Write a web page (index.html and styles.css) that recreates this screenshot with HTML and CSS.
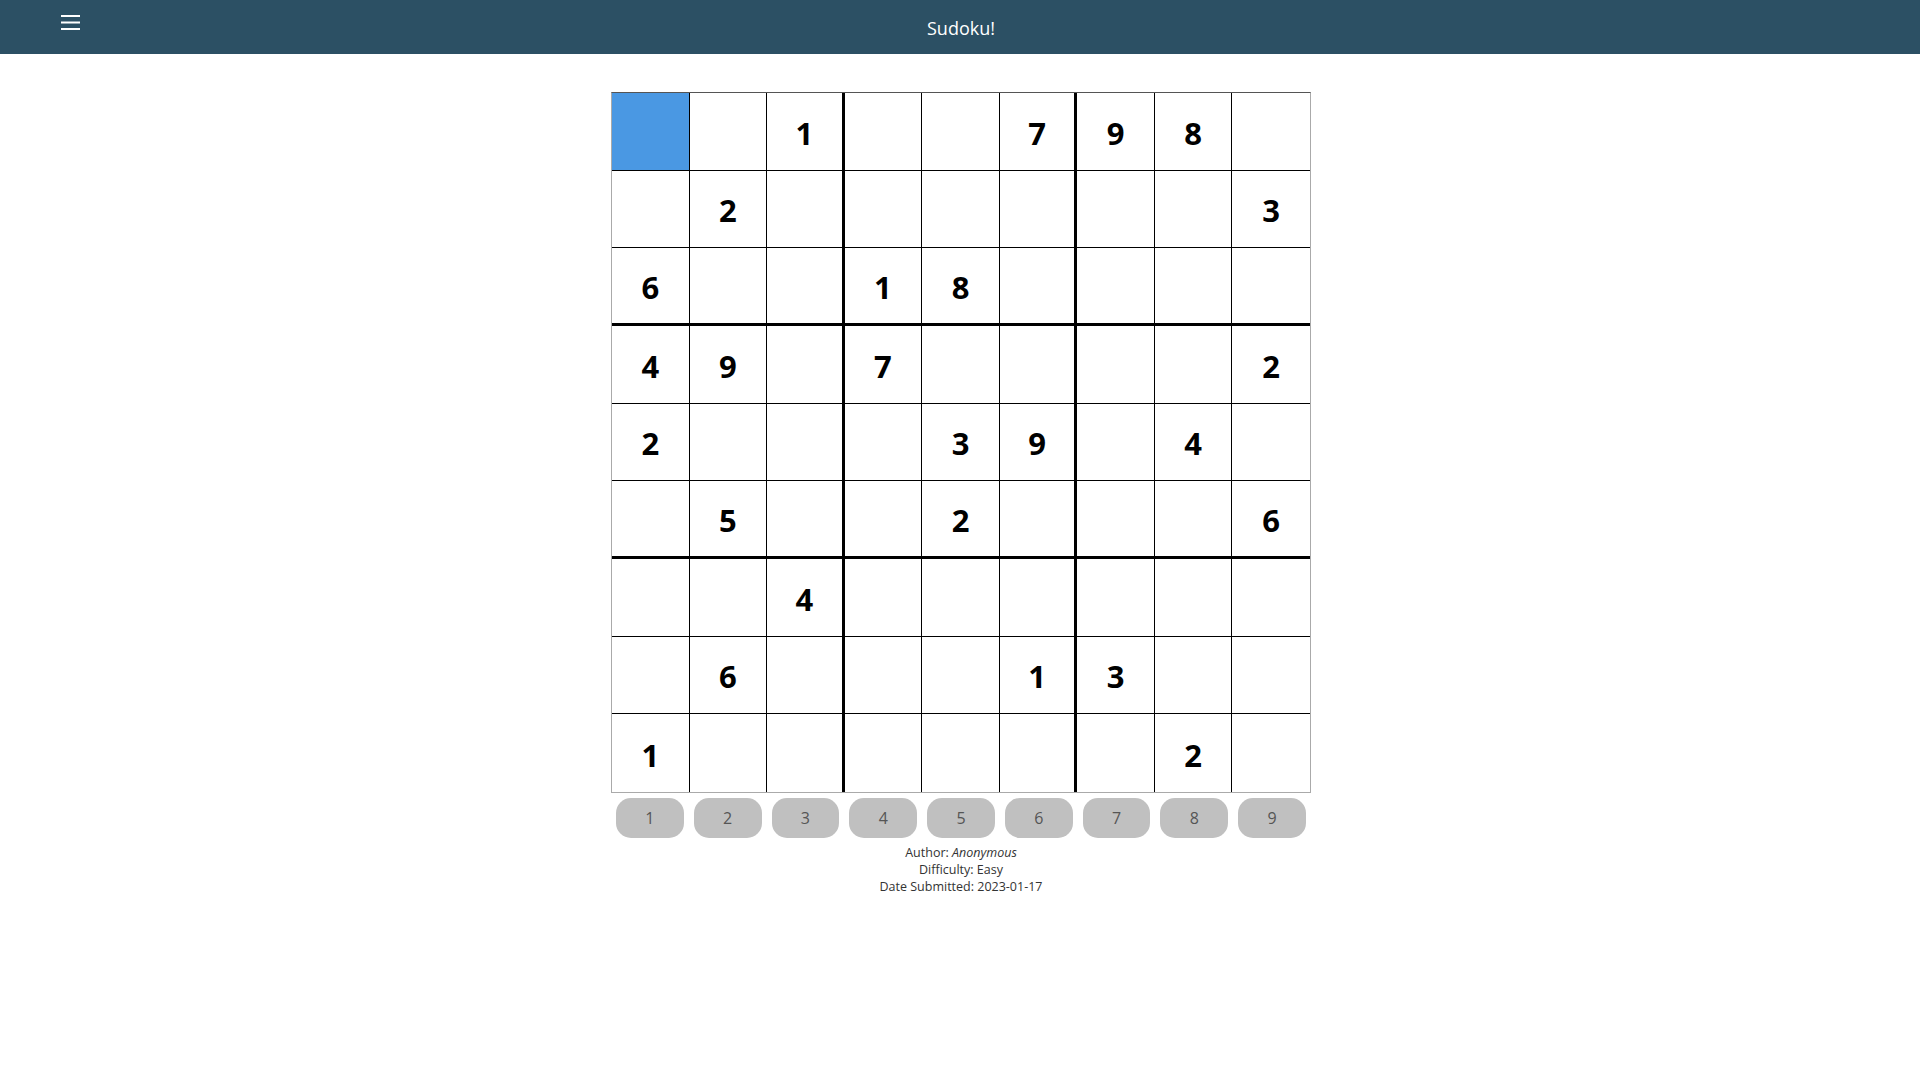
FILE: index.html
```html
<!DOCTYPE html>
<html lang="en">
<head>
<meta charset="utf-8">
<title>Sudoku!</title>
<link rel="stylesheet" href="styles.css">
</head>
<body>
<header class="topbar">
  <button class="menu-btn" aria-label="Menu">
    <svg width="19" height="16" viewBox="0 0 19 16"><rect x="0" y="1" width="19" height="2" fill="#fff"/><rect x="0" y="7.5" width="19" height="2" fill="#fff"/><rect x="0" y="14" width="19" height="2" fill="#fff"/></svg>
  </button>
  <h1 class="title">Sudoku!</h1>
</header>
<main class="page">
  <div class="board" id="board">
    <div class="cell selected"></div><div class="cell"></div><div class="cell c3">1</div><div class="cell"></div><div class="cell"></div><div class="cell c3">7</div><div class="cell">9</div><div class="cell">8</div><div class="cell c9"></div>
    <div class="cell"></div><div class="cell">2</div><div class="cell c3"></div><div class="cell"></div><div class="cell"></div><div class="cell c3"></div><div class="cell"></div><div class="cell"></div><div class="cell c9">3</div>
    <div class="cell r3">6</div><div class="cell r3"></div><div class="cell r3 c3"></div><div class="cell r3">1</div><div class="cell r3">8</div><div class="cell r3 c3"></div><div class="cell r3"></div><div class="cell r3"></div><div class="cell r3 c9"></div>
    <div class="cell">4</div><div class="cell">9</div><div class="cell c3"></div><div class="cell">7</div><div class="cell"></div><div class="cell c3"></div><div class="cell"></div><div class="cell"></div><div class="cell c9">2</div>
    <div class="cell">2</div><div class="cell"></div><div class="cell c3"></div><div class="cell"></div><div class="cell">3</div><div class="cell c3">9</div><div class="cell"></div><div class="cell">4</div><div class="cell c9"></div>
    <div class="cell r3"></div><div class="cell r3">5</div><div class="cell r3 c3"></div><div class="cell r3"></div><div class="cell r3">2</div><div class="cell r3 c3"></div><div class="cell r3"></div><div class="cell r3"></div><div class="cell r3 c9">6</div>
    <div class="cell"></div><div class="cell"></div><div class="cell c3">4</div><div class="cell"></div><div class="cell"></div><div class="cell c3"></div><div class="cell"></div><div class="cell"></div><div class="cell c9"></div>
    <div class="cell"></div><div class="cell">6</div><div class="cell c3"></div><div class="cell"></div><div class="cell"></div><div class="cell c3">1</div><div class="cell">3</div><div class="cell"></div><div class="cell c9"></div>
    <div class="cell r9">1</div><div class="cell r9"></div><div class="cell r9 c3"></div><div class="cell r9"></div><div class="cell r9"></div><div class="cell r9 c3"></div><div class="cell r9"></div><div class="cell r9">2</div><div class="cell r9 c9"></div>
  </div>
  <div class="numpad">
    <button class="num">1</button><button class="num">2</button><button class="num">3</button><button class="num">4</button><button class="num">5</button><button class="num">6</button><button class="num">7</button><button class="num">8</button><button class="num">9</button>
  </div>
  <div class="info">
    <div>Author: <em>Anonymous</em></div>
    <div>Difficulty: Easy</div>
    <div>Date Submitted: 2023-01-17</div>
  </div>
</main>
</body>
</html>
```
FILE: styles.css
```css
* { box-sizing: border-box; }
html, body { margin: 0; padding: 0; background: #fff; }
body { font-family: "Open Sans", "Noto Sans", sans-serif; color: #333; }

.topbar {
  height: 54px;
  background: #2c5064;
  display: flex;
  align-items: center;
  justify-content: center;
  position: relative;
}
.menu-btn {
  position: absolute;
  left: 61px;
  top: 14px;
  padding: 0;
  border: 0;
  background: none;
  line-height: 0;
  cursor: pointer;
}
.title {
  margin: 0;
  font-size: 18px;
  font-weight: 400;
  color: #fff;
  padding-top: 2px;
  padding-left: 2px;
}

.page {
  display: flex;
  flex-direction: column;
  align-items: center;
  padding-top: 38px;
  padding-left: 2px;
}

.board {
  width: 700px;
  height: 701px;
  display: grid;
  grid-template-columns: repeat(9, 1fr);
  grid-template-rows: repeat(9, 1fr);
  border: 1px solid #aaa;
  border-top-color: #555;
}
.cell {
  border-right: 1px solid #000;
  border-bottom: 1px solid #000;
  display: flex;
  align-items: center;
  justify-content: center;
  font-size: 31px;
  font-weight: 700;
  color: #000;
  padding-top: 3px;
}
.cell.c3 { border-right-width: 3px; }
.cell.c9 { border-right: 0; }
.cell.r3 { border-bottom-width: 3px; }
.cell.r9 { border-bottom: 0; }
.cell.selected { background: #4a98e3; }

.numpad {
  width: 700px;
  display: grid;
  grid-template-columns: repeat(9, 1fr);
  margin-top: 5px;
}
.num {
  margin: 0 5px;
  height: 40px;
  border: 0;
  border-radius: 15px;
  background: #c0c0c0;
  color: #555;
  font-family: "Open Sans", "Noto Sans", sans-serif;
  font-size: 16px;
  padding: 0;
}

.info {
  margin-top: 6px;
  text-align: center;
  font-size: 12.5px;
  line-height: 17px;
  color: #333;
}
.info em { font-style: italic; }
```
